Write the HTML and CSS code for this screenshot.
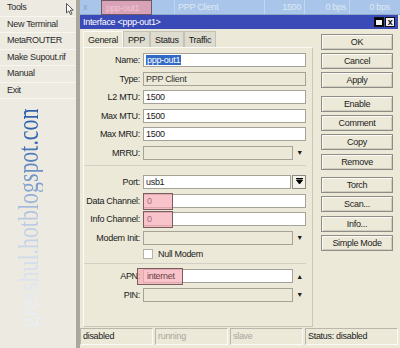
FILE: index.html
```html
<!DOCTYPE html>
<html lang="en">

<head>
  <meta charset="UTF-8" />
  <title>Interface ppp-out1</title>
  <link rel="stylesheet" href="styles.css">
</head>

<body>
  <div class="menu">
    <div class="menu-item">Tools
      <svg class="cursor" width="8" height="12" viewBox="0 0 8 12">
        <path d="M0.5 0.5 L0.5 10 L2.8 7.8 L4.5 11.5 L6 10.8 L4.3 7.2 L7.3 7.2 Z" fill="#fff" stroke="#555" stroke-width="1" />
      </svg>
    </div>
    <div class="menu-item">New Terminal</div>
    <div class="menu-item">MetaROUTER</div>
    <div class="menu-item">Make Supout.rif</div>
    <div class="menu-item">Manual</div>
    <div class="menu-item">Exit</div>
    <div class="watermark">gresshul.hotblogspot.com</div>
  </div>

  <div class="main">
    <div class="list-row">
      <span class="cell c-flag">x</span>
      <span class="cell c-name"><span class="mark">ppp-out1</span></span>
      <span class="cell c-type">PPP Client</span>
      <span class="cell c-mtu">1500</span>
      <span class="cell c-tx">0 bps</span>
      <span class="cell c-rx">0 bps</span>
    </div>

    <div class="dialog">
      <div class="titlebar">
        <span>Interface &lt;ppp-out1&gt;</span>
        <span class="win-btns">
          <span class="wbtn"><span class="max-icon"></span></span>
          <span class="wbtn close">x</span>
        </span>
      </div>

      <div class="dlg-body">
        <div class="left">
          <div class="tabs">
            <span class="tab active">General</span>
            <span class="tab">PPP</span>
            <span class="tab">Status</span>
            <span class="tab">Traffic</span>
          </div>

          <div class="panel">
            <div class="group first">
              <div class="row">
                <label>Name:</label>
                <div class="field"><span class="selected">ppp-out1</span></div>
              </div>
              <div class="row">
                <label>Type:</label>
                <div class="field off">PPP Client</div>
              </div>
              <div class="row">
                <label>L2 MTU:</label>
                <div class="field">1500</div>
              </div>
              <div class="row">
                <label>Max MTU:</label>
                <div class="field">1500</div>
              </div>
              <div class="row">
                <label>Max MRU:</label>
                <div class="field">1500</div>
              </div>
              <div class="row">
                <label>MRRU:</label>
                <div class="field off"></div>
                <span class="arrow">&#9660;</span>
              </div>
            </div>

            <div class="group second">
              <div class="row">
                <label>Port:</label>
                <div class="field">usb1</div>
                <span class="pick">
                  <svg width="7" height="7" viewBox="0 0 7 7"><path d="M0 0.5 H7 M0.5 2 H6.5 L3.5 6 Z" stroke="#000" stroke-width="1" fill="#000" /></svg>
                </span>
              </div>
              <div class="row">
                <label>Data Channel:</label>
                <div class="field"><span class="hl">0</span></div>
              </div>
              <div class="row">
                <label>Info Channel:</label>
                <div class="field"><span class="hl">0</span></div>
              </div>
              <div class="row">
                <label>Modem Init:</label>
                <div class="field off"></div>
                <span class="arrow">&#9660;</span>
              </div>
              <div class="row short">
                <label></label>
                <div class="check"><span class="box"></span>Null Modem</div>
              </div>
            </div>

            <div class="group last">
              <div class="row">
                <label>APN:</label>
                <div class="field apn"><span class="hl wide">internet</span></div>
                <span class="arrow">&#9650;</span>
              </div>
              <div class="row">
                <label>PIN:</label>
                <div class="field off"></div>
                <span class="arrow">&#9660;</span>
              </div>
            </div>
          </div>
        </div>

        <div class="buttons">
          <div class="btn-group">
            <button>OK</button>
            <button>Cancel</button>
            <button>Apply</button>
          </div>
          <div class="btn-group">
            <button>Enable</button>
            <button>Comment</button>
            <button>Copy</button>
            <button>Remove</button>
          </div>
          <div class="btn-group">
            <button>Torch</button>
            <button>Scan...</button>
            <button>Info...</button>
            <button>Simple Mode</button>
          </div>
        </div>
      </div>

      <div class="statusbar">
        <span class="sb-cell">disabled</span>
        <span class="sb-cell dim">running</span>
        <span class="sb-cell dim">slave</span>
        <span class="sb-cell wide">Status: disabled</span>
      </div>
    </div>
  </div>
</body>

</html>
```

FILE: styles.css
```css
body {
  margin: 0;
  padding: 0;
  width: 400px;
  height: 348px;
  overflow: hidden;
  display: flex;

  font-family: "Liberation Sans", Arial, sans-serif;
  font-size: 9px;
  letter-spacing: -0.3px;
  white-space: nowrap;
  color: #1a1a1a;
  background-color: #ece9d8;
}

/* left side menu */

.menu {
  position: relative;
  width: 76px;
  flex: none;
  background-color: #edebe1;
  border-right: 4px solid #a9a79e;
}

.menu-item {
  position: relative;
  height: 15.5px;
  line-height: 15.5px;
  padding-left: 7px;
  border-bottom: 1px solid #f7f6f1;
  color: #2a2a2a;
}

.cursor {
  position: absolute;
  left: 66px;
  top: 3px;
}

.watermark {
  position: absolute;
  left: -122px;
  top: 203px;
  width: 300px;
  text-align: center;
  font-family: "Liberation Serif", serif;
  font-size: 30px;
  letter-spacing: 0;
  line-height: 30px;
  transform: rotate(-90deg) scaleX(0.73);
  background: linear-gradient(to right, #e9edf4 12%, #b7c8e4 50%, #2f62ae 88%);
  -webkit-background-clip: text;
  background-clip: text;
  color: transparent;
}

/* right side */

.main {
  flex: 1;
  display: flex;
  flex-direction: column;
}

.list-row {
  height: 15px;
  flex: none;
  display: flex;
  background-color: #a9c6ea;
  color: #dfe8f3;
  line-height: 14px;
  border-bottom: 1px solid #8fa9c9;
  box-sizing: border-box;
}

.cell {
  border-right: 1px solid #c2d6ef;
  box-sizing: border-box;
  padding: 0 3px;
}

.c-flag { width: 22px; color: #8aa0bb; }
.c-name { width: 73px; padding: 0; }
.c-type { width: 90px; }
.c-mtu { width: 40px; text-align: right; }
.c-tx { width: 45px; text-align: right; }
.c-rx { flex: 1; text-align: right; border-right: none; padding-right: 10px; }

.mark {
  display: block;
  margin-left: -1px;
  width: 51px;
  height: 15px;
  box-sizing: border-box;
  border: 1px solid #6f5a63;
  background-color: rgba(232, 150, 168, 0.75);
  color: #f3c6cf;
  padding-left: 4px;
}

.dialog {
  flex: 1;
  display: flex;
  flex-direction: column;
  padding: 0 2px 3px 0;
}

.titlebar {
  height: 14px;
  flex: none;
  display: flex;
  justify-content: space-between;
  align-items: center;
  padding-left: 3px;
  background-color: #3a4ab6;
  color: #fff;
}

.win-btns {
  display: flex;
  gap: 1px;
  padding-right: 3px;
}

.wbtn {
  width: 10px;
  height: 10px;
  box-sizing: border-box;
  border: 1px solid #111;
  background-color: #f4f4f4;
  display: flex;
  align-items: center;
  justify-content: center;
  color: #000;
  font-weight: bold;
  font-size: 9px;
  line-height: 8px;
}

.max-icon {
  width: 6px;
  height: 5px;
  border: 1px solid #000;
  border-top-width: 2px;
}

.dlg-body {
  flex: 1;
  display: flex;
}

.left {
  width: 230px;
  padding-left: 3px;
  display: flex;
  flex-direction: column;
}

.tabs {
  display: flex;
  margin-top: 2px;
  height: 16px;
}

.tab {
  padding: 0 4px;
  line-height: 16px;
  background-color: #dedbcf;
  border: 1px solid #c4c1b5;
  border-bottom: none;
  box-sizing: border-box;
}

.tab.active {
  background-color: #ece9d8;
  border-color: #fbfaf6;
}

.panel {
  height: 280px;
  box-sizing: border-box;
  border: 1px solid #c9c6ba;
  border-top-color: #fbfaf6;
  border-left-color: #fbfaf6;
  padding: 5px 6px 0 0;
}

.group {
  display: flex;
  flex-direction: column;
  gap: 4.6px;
  border-bottom: 1px solid #d2cfc3;
}

.group.first {
  padding-bottom: 5px;
  margin-bottom: 9px;
}

.group.second {
  padding-bottom: 4px;
  margin-bottom: 5px;
}

.group.last {
  border-bottom: none;
}

.row {
  display: flex;
  align-items: center;
  height: 14px;
}

.row.short {
  height: 10px;
}

.row label {
  width: 56px;
  text-align: right;
  padding-right: 3px;
  flex: none;
}

.field {
  position: relative;
  flex: 1;
  height: 14px;
  box-sizing: border-box;
  border: 1px solid #a5a398;
  background-color: #fff;
  padding-left: 2px;
  line-height: 12px;
}

.field.off {
  background-color: #ece9d8;
  color: #333;
}

.selected {
  background-color: #316ac5;
  color: #fff;
  padding: 0 1px;
}

.arrow {
  width: 13px;
  flex: none;
  text-align: center;
  font-size: 7px;
}

.pick {
  width: 12px;
  height: 12px;
  margin-left: 1px;
  flex: none;
  border: 1px solid #8b8a82;
  background-color: #f3f1e8;
  display: flex;
  align-items: center;
  justify-content: center;
}

.hl {
  position: absolute;
  left: -1px;
  top: -2px;
  width: 30px;
  height: 17px;
  box-sizing: border-box;
  padding-left: 3px;
  line-height: 15px;
  border: 1px solid #7a5c63;
  background-color: rgba(246, 170, 182, 0.7);
  color: #a56a72;
}

.hl.wide {
  left: -7px;
  width: 46px;
  padding-left: 9px;
  color: #6e3f48;
}

.check {
  display: flex;
  align-items: center;
  gap: 5px;
}

.box {
  width: 10px;
  height: 10px;
  box-sizing: border-box;
  border: 1px solid #b4b2a8;
  background-color: #fff;
}

/* buttons column */

.buttons {
  flex: 1;
  padding: 5px 0 0 8px;
  display: flex;
  flex-direction: column;
  gap: 7.6px;
}

.btn-group {
  display: flex;
  flex-direction: column;
  gap: 3.2px;
}

button {
  width: 72px;
  height: 16px;
  padding: 0;
  font-family: inherit;
  font-size: 9px;
  letter-spacing: -0.3px;
  color: #222;
  background-color: #ece9d8;
  border: 1px solid #8e8c84;
  box-shadow: inset 1px 1px 0 #fbfaf6, inset -1px -1px 0 #cfccc0;
}

/* status bar */

.statusbar {
  display: flex;
  gap: 2px;
  margin-top: 1px;
  height: 17px;
}

.sb-cell {
  width: 73px;
  box-sizing: border-box;
  border: 1px solid #b9b6aa;
  border-right-color: #fbfaf6;
  border-bottom-color: #fbfaf6;
  padding-left: 2px;
  line-height: 15px;
}

.sb-cell.dim {
  color: #a9a79e;
}

.sb-cell.wide {
  flex: 1;
}
```
